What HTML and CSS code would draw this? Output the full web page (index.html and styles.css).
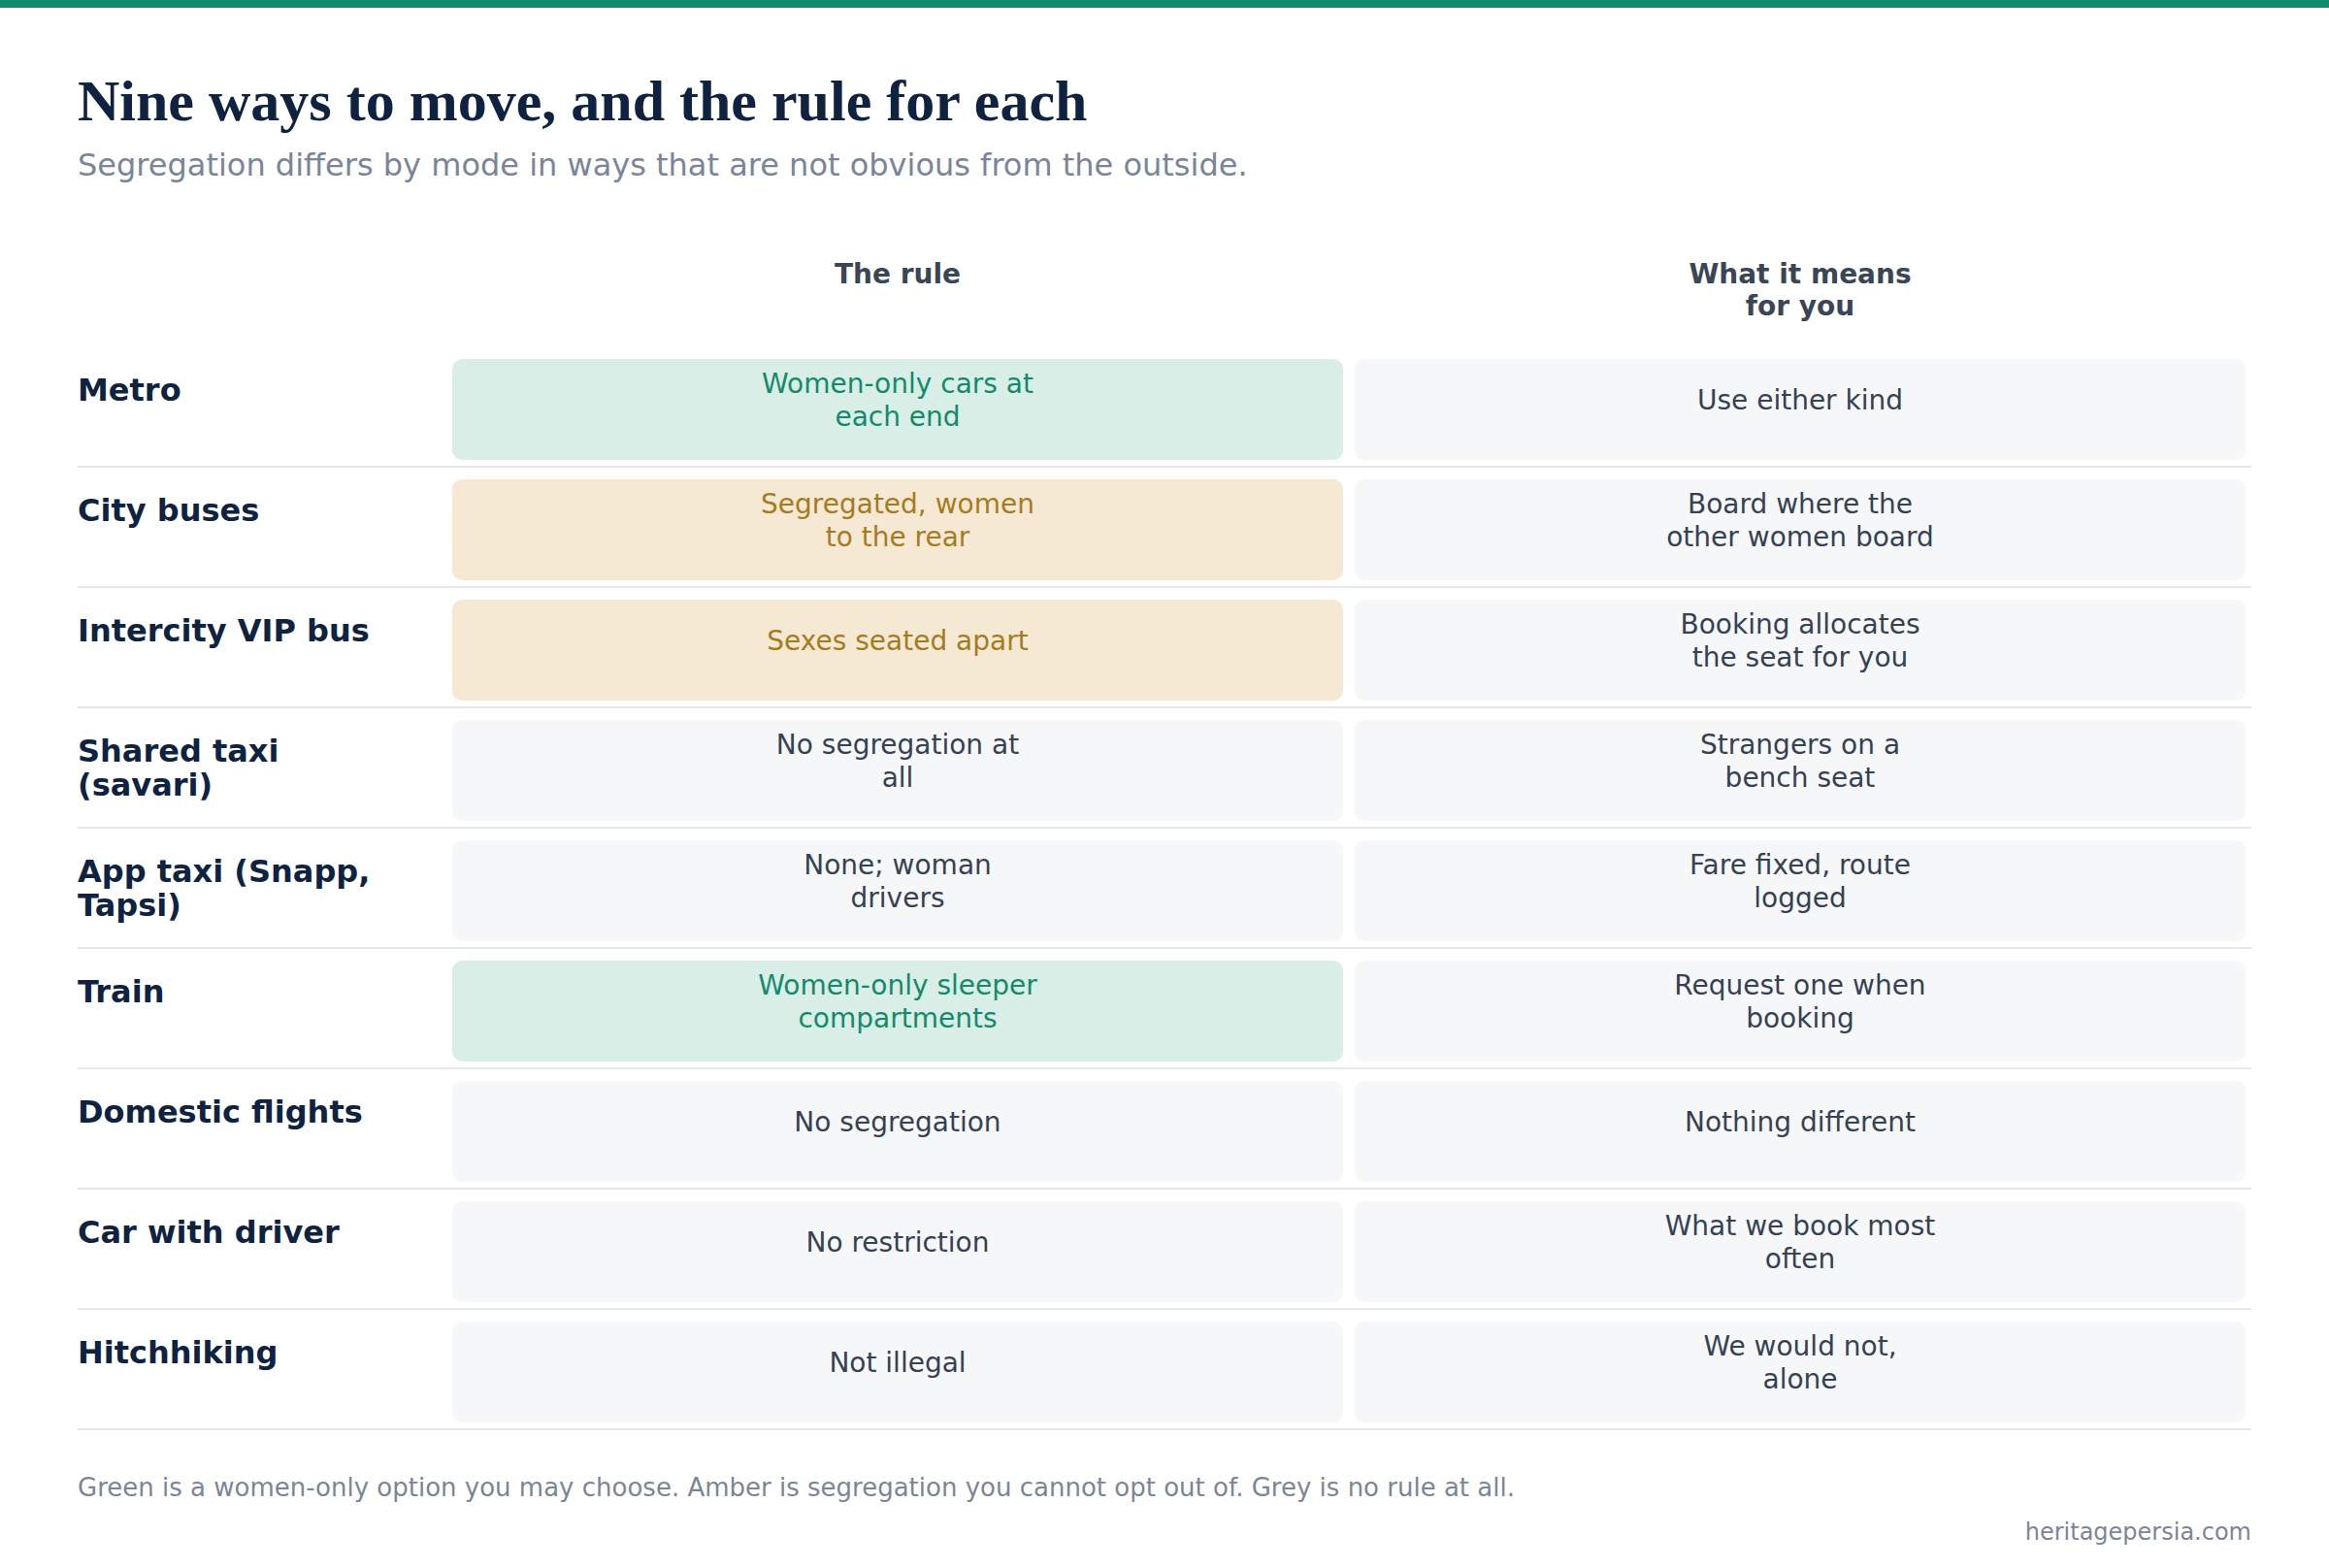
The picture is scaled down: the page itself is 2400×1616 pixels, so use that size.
FILE: index.html
```html
<!DOCTYPE html>
<html lang="en">
<head>
<meta charset="utf-8">
<title>Nine ways to move, and the rule for each</title>
<link rel="stylesheet" href="styles.css">
</head>
<body>
<div class="topbar"></div>
<main class="page">
  <h1 class="title">Nine ways to move, and the rule for each</h1>
  <p class="subtitle">Segregation differs by mode in ways that are not obvious from the outside.</p>

  <div class="table">
    <div class="head">
      <div class="head-cell"></div>
      <div class="head-cell"><span class="head-text">The rule</span></div>
      <div class="head-cell"><span class="head-text">What it means<br>for you</span></div>
    </div>

    <div class="row">
      <div class="label">Metro</div>
      <div class="cell green"><span class="txt">Women-only cars at<br>each end</span></div>
      <div class="cell grey"><span class="txt">Use either kind</span></div>
    </div>
    <div class="row">
      <div class="label">City buses</div>
      <div class="cell amber"><span class="txt">Segregated, women<br>to the rear</span></div>
      <div class="cell grey"><span class="txt">Board where the<br>other women board</span></div>
    </div>
    <div class="row">
      <div class="label">Intercity VIP bus</div>
      <div class="cell amber"><span class="txt">Sexes seated apart</span></div>
      <div class="cell grey"><span class="txt">Booking allocates<br>the seat for you</span></div>
    </div>
    <div class="row">
      <div class="label">Shared taxi (savari)</div>
      <div class="cell grey"><span class="txt">No segregation at<br>all</span></div>
      <div class="cell grey"><span class="txt">Strangers on a<br>bench seat</span></div>
    </div>
    <div class="row">
      <div class="label">App taxi (Snapp, Tapsi)</div>
      <div class="cell grey"><span class="txt">None; woman<br>drivers</span></div>
      <div class="cell grey"><span class="txt">Fare fixed, route<br>logged</span></div>
    </div>
    <div class="row">
      <div class="label">Train</div>
      <div class="cell green"><span class="txt">Women-only sleeper<br>compartments</span></div>
      <div class="cell grey"><span class="txt">Request one when<br>booking</span></div>
    </div>
    <div class="row">
      <div class="label">Domestic flights</div>
      <div class="cell grey"><span class="txt">No segregation</span></div>
      <div class="cell grey"><span class="txt">Nothing different</span></div>
    </div>
    <div class="row">
      <div class="label">Car with driver</div>
      <div class="cell grey"><span class="txt">No restriction</span></div>
      <div class="cell grey"><span class="txt">What we book most<br>often</span></div>
    </div>
    <div class="row">
      <div class="label">Hitchhiking</div>
      <div class="cell grey"><span class="txt">Not illegal</span></div>
      <div class="cell grey"><span class="txt">We would not,<br>alone</span></div>
    </div>
  </div>

  <p class="note">Green is a women-only option you may choose. Amber is segregation you cannot opt out of. Grey is no rule at all.</p>
  <p class="credit">heritagepersia.com</p>
</main>
</body>
</html>
```

FILE: styles.css
```css
* { box-sizing: border-box; }

html, body {
  margin: 0;
  padding: 0;
  background: #ffffff;
}

body {
  font-family: "DejaVu Sans", "Noto Sans", sans-serif;
  color: #364153;
}

.topbar {
  height: 8px;
  background: #128a6e;
}

.page {
  padding: 60px 80px 0 80px;
}

.title {
  margin: 0;
  font-family: "Liberation Serif", "Times New Roman", serif;
  font-weight: 700;
  font-size: 60px;
  line-height: 72px;
  color: #0f2340;
}

.subtitle {
  margin: 8px 0 0 0;
  font-size: 32px;
  line-height: 44.8px;
  color: #7b8599;
}

.table {
  margin-top: 73px;
}

.head,
.row {
  display: grid;
  grid-template-columns: 380px 1fr 1fr;
}

.head {
  padding-bottom: 25px;
}

.head-cell {
  display: flex;
  justify-content: center;
  text-align: center;
}

.head-text {
  font-size: 28px;
  line-height: 33.6px;
  font-weight: 700;
  color: #3a4556;
}

.row {
  padding: 12px 0 6px 0;
  border-bottom: 2px solid #e5e6e9;
}

.label {
  padding: 15px 40px 0 0;
  font-size: 32px;
  line-height: 35.2px;
  font-weight: 700;
  color: #0f2341;
}

.cell {
  margin: 0 6px;
  height: 104px;
  border-radius: 10px;
  padding: 13px 24px 31px 24px;
  display: flex;
  align-items: center;
  justify-content: center;
  text-align: center;
}

.txt {
  font-size: 28px;
  line-height: 33.6px;
}

.grey {
  background: #f5f7f9;
  color: #364153;
}

.green {
  background: #d9eee6;
  color: #138a6c;
}

.amber {
  background: #f6e9d4;
  color: #a67b1f;
}

.note {
  margin: 41px 0 0 0;
  font-size: 26px;
  line-height: 36px;
  color: #7c8598;
}

.credit {
  margin: 12px 0 0 0;
  text-align: right;
  font-size: 24px;
  line-height: 33.6px;
  color: #7c8598;
}
```
